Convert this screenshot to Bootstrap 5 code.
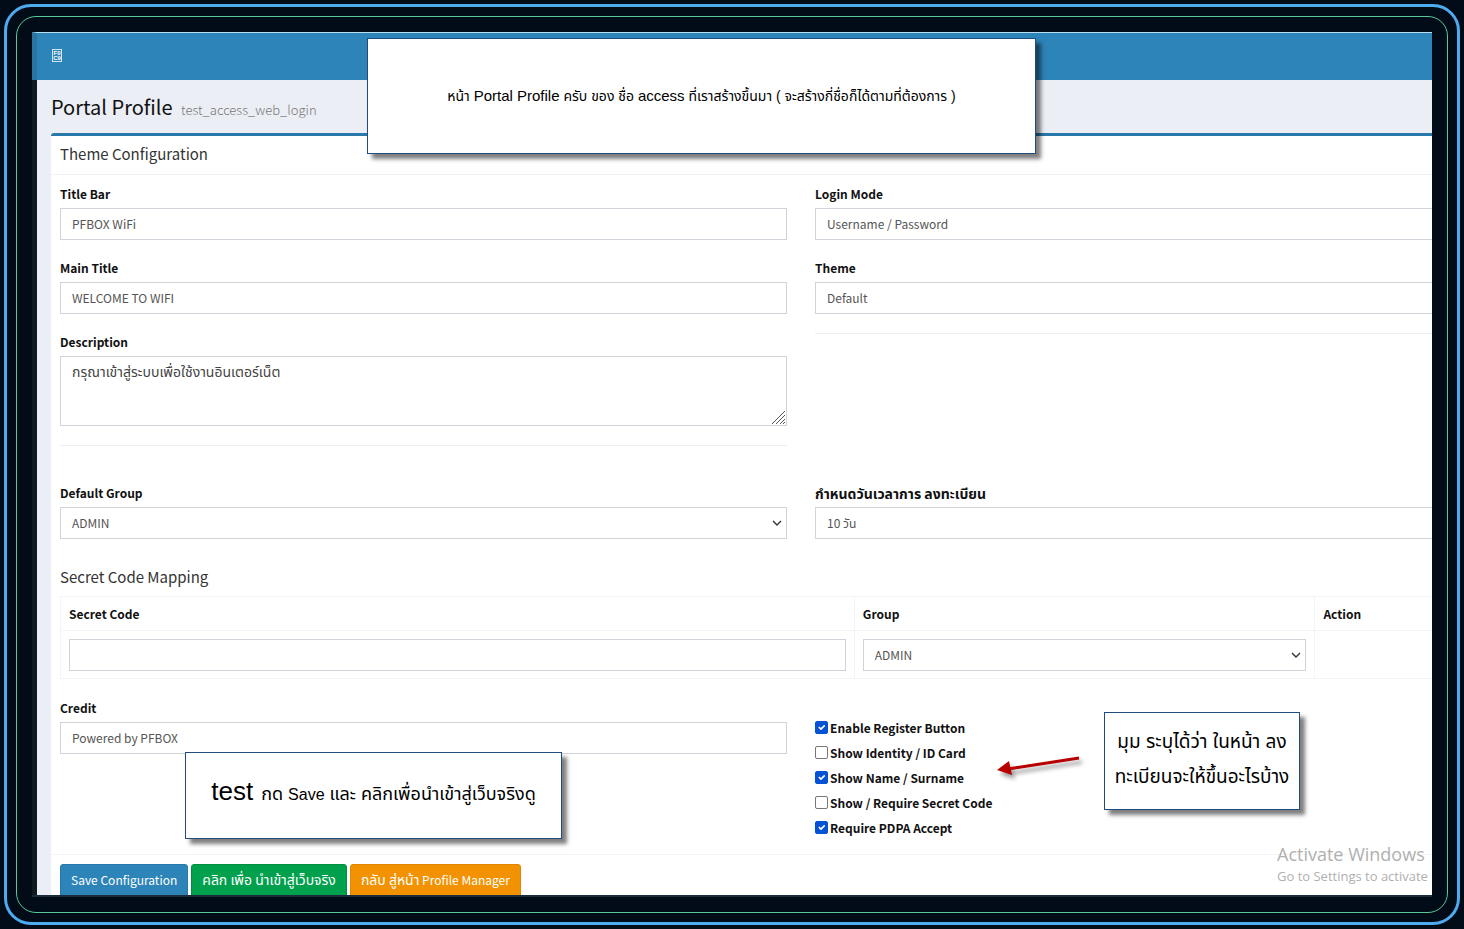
<!DOCTYPE html>
<html lang="th">
<head>
<meta charset="utf-8">
<meta name="viewport" content="width=device-width, initial-scale=1">
<title>Portal Profile</title>
<link href="https://cdn.jsdelivr.net/npm/bootstrap@5.3.0/dist/css/bootstrap.min.css" rel="stylesheet">
<style>
  :root { --ui-font: "Noto Sans CJK SC", "Noto Sans Thai", "Noto Sans", sans-serif; --note-font: "Liberation Sans", "Noto Sans Thai", sans-serif; }
  body { background: #020b18; font-family: var(--ui-font); font-size: 12px; line-height: 18px; color: #222; }
  .frame-outer { height: 100vh; padding: 4px; }
  .frame-blue { border: 3px solid #4eabf0; border-radius: 27px; padding: 9px; }
  .frame-green { border: 1px solid #57c99a; border-radius: 20px; padding: 15px; }
  .screen { background: #ebeef5; border-bottom: 2px solid #1a2b3c; }
  .wide-app { width: 109.5%; }
  .topbar { height: 48px; padding: 0 15px; background: #2d84b8; border-top: 1px solid #b9def0; border-left: 5px solid #2b75a3; }
  .page-area { border-left: 5px solid #0f1a20; }
  .glyph-btn { width: 10px; height: 13px; border: 1px solid #cfe6f4; background: none; color: #fff; font: bold 6px/5px "Liberation Sans", sans-serif; padding: 0; margin-bottom: 2px; }
  .page-head { padding: 14px 14px 0; height: 53px; }
  .page-head h1 { font-size: 20px; line-height: 26px; font-weight: 400; color: #111; }
  .page-head small { font-size: 13px; font-weight: 300; color: #777; margin-left: 4px; }
  .panel { margin: 0 14px; background: #fff; border-top: 3px solid #2878a9; border-radius: 3px 3px 0 0; }
  .panel-head { padding: 8px 9px 0; height: 39px; border-bottom: 1px solid #f2f2f2; }
  .sub-head { font-size: 15px; line-height: 20px; font-weight: 400; color: #333; margin: 0; }
  .map-head { padding-top: 9px; }
  .panel-main { padding: 10px 9px 0; }
  .panel .row { --bs-gutter-x: 28px; }
  .group-row { padding-top: 38px; }
  .field { margin-bottom: 19px; }
  .field label { display: block; font-weight: 700; color: #111; margin-bottom: 5px; }
  .form-control, .form-select { border: 1px solid #d0d3da; border-radius: 0; font-size: 12px; line-height: 18px; height: 32px; color: #555; background-color: #fff; }
  .form-control { padding: 5px 11px 7px; }
  .form-select { padding: 6px 11px; background-image: url("data:image/svg+xml,%3Csvg xmlns='http://www.w3.org/2000/svg' viewBox='0 0 10 10'%3E%3Cpath fill='none' stroke='%23333' stroke-width='1.4' d='M1 3l4 4 4-4'/%3E%3C/svg%3E"); background-size: 10px 10px; background-position: right 4px center; }
  textarea.form-control { height: 70px; color: #444; resize: none; background-image: url("data:image/svg+xml,%3Csvg xmlns='http://www.w3.org/2000/svg' viewBox='0 0 14 14'%3E%3Cpath fill='none' stroke='%23555' d='M1 14L14 1M5 14L14 5M9 14L14 9M12 14l2-2'/%3E%3C/svg%3E"); background-size: 14px 14px; background-repeat: no-repeat; background-position: right 1px bottom 1px; }
  .thai-text, .field .thai-text, textarea.thai-text { font-size: 14px; }
  .rule { height: 1px; background: #eee; }
  .panel-main .map-table { margin: 9px 0 20px; border-color: #f4f4f4; table-layout: fixed; }
  .map-table th, .map-table td { padding: 8px 8px 7px; color: #111; background: #fff; }
  .tick-col { padding-top: 20px; padding-bottom: 10px; }
  .tick { gap: 2px; height: 25px; margin: 0; font-weight: 700; color: #111; }
  .tick .form-check-input { width: 13px; height: 13px; margin: 2px 0 0; border: 1px solid #767676; border-radius: 2px; }
  .tick .form-check-input:checked { background-color: #0553d5; border-color: #0553d5; }
  .panel-foot { border-top: 1px solid #f4f4f4; padding: 9px 9px 20px; gap: 3px; }
  .panel-foot .btn { font-size: 12px; line-height: 20px; padding: 4px 10px 8px; border-radius: 3px; color: #fff; }
  .panel-foot .b-save { background: #2d84b8; border-color: #2878a9; }
  .panel-foot .b-go { background: #00a04c; border-color: #008d43; }
  .panel-foot .b-back { background: #f39200; border-color: #e08600; }
  .note { position: absolute; background: #fff; border: 1px solid #1f4b7d; box-shadow: 5px 5px 4px rgba(0,0,0,.5); color: #000; font-family: var(--note-font); text-align: center; }
  .note-top { left: 335px; top: 6px; width: 669px; height: 116px; font-size: 14px; line-height: 24px; }
  .note-top span { font-size: 15px; }
  .note-test { left: 153px; top: 720px; width: 377px; height: 87px; padding-bottom: 6px; font-size: 18px; line-height: 30px; }
  .note-test .big { font-size: 26px; margin-right: 3px; }
  .note-test .light { font-size: 16px; }
  .note-reg { left: 1072px; top: 680px; width: 196px; height: 98px; font-size: 19px; line-height: 35px; padding: 11px 0; white-space: nowrap; }
  .arrow { position: absolute; left: 962px; top: 720px; filter: drop-shadow(3px 4px 2px rgba(0,0,0,.4)); }
  .watermark { position: absolute; left: 1245px; top: 811px; white-space: nowrap; color: #b0b0b0; font-family: "Open Sans", sans-serif; font-size: 13px; line-height: 20px; }
  .watermark div { font-size: 18px; line-height: 23px; }
</style>
</head>
<body>
<div class="frame-outer">
  <div class="frame-blue h-100">
    <div class="frame-green h-100">
      <div class="position-relative h-100 overflow-hidden">
        <main class="screen h-100 overflow-hidden">
          <div class="wide-app">
            <nav class="topbar d-flex align-items-center"><button class="glyph-btn" type="button" aria-label="Menu">F0<br>C9</button></nav>
            <div class="page-area">
            <header class="page-head"><h1 class="m-0">Portal Profile <small>test_access_web_login</small></h1></header>
            <form class="panel">
              <div class="panel-head"><h2 class="sub-head">Theme Configuration</h2></div>
              <div class="panel-main">
                <div class="row">
                  <div class="col-6">
                    <div class="field"><label for="bar">Title Bar</label><input id="bar" class="form-control" value="PFBOX WiFi"></div>
                    <div class="field"><label for="main">Main Title</label><input id="main" class="form-control" value="WELCOME TO WIFI"></div>
                    <div class="field"><label for="desc">Description</label><textarea id="desc" class="form-control thai-text">กรุณาเข้าสู่ระบบเพื่อใช้งานอินเตอร์เน็ต</textarea></div>
                    <div class="rule"></div>
                  </div>
                  <div class="col-6">
                    <div class="field"><label for="mode">Login Mode</label><select id="mode" class="form-select"><option>Username / Password</option></select></div>
                    <div class="field"><label for="theme">Theme</label><select id="theme" class="form-select"><option>Default</option></select></div>
                    <div class="rule"></div>
                  </div>
                </div>
                <div class="row group-row">
                  <div class="col-6"><div class="field"><label for="grp">Default Group</label><select id="grp" class="form-select"><option>ADMIN</option></select></div></div>
                  <div class="col-6"><div class="field"><label for="days" class="thai-text">กำหนดวันเวลาการ ลงทะเบียน</label><select id="days" class="form-select"><option>10 วัน</option></select></div></div>
                </div>
                <h2 class="sub-head map-head">Secret Code Mapping</h2>
                <table class="table table-bordered map-table">
                  <colgroup><col style="width:53.6%"><col style="width:31.1%"><col></colgroup>
                  <thead><tr><th>Secret Code</th><th>Group</th><th>Action</th></tr></thead>
                  <tbody><tr><td><input class="form-control" aria-label="Secret Code"></td><td><select class="form-select" aria-label="Group"><option>ADMIN</option></select></td><td></td></tr></tbody>
                </table>
                <div class="row">
                  <div class="col-6"><div class="field"><label for="credit">Credit</label><input id="credit" class="form-control" value="Powered by PFBOX"></div></div>
                  <div class="col-6 tick-col">
                    <label class="tick d-flex"><input type="checkbox" class="form-check-input" checked>Enable Register Button</label>
                    <label class="tick d-flex"><input type="checkbox" class="form-check-input">Show Identity / ID Card</label>
                    <label class="tick d-flex"><input type="checkbox" class="form-check-input" checked>Show Name / Surname</label>
                    <label class="tick d-flex"><input type="checkbox" class="form-check-input">Show / Require Secret Code</label>
                    <label class="tick d-flex"><input type="checkbox" class="form-check-input" checked>Require PDPA Accept</label>
                  </div>
                </div>
              </div>
              <div class="panel-foot d-flex">
                <button type="button" class="btn b-save">Save Configuration</button>
                <button type="button" class="btn b-go"><span class="thai-text">คลิก เพื่อ นำเข้าสู่เว็บจริง</span></button>
                <button type="button" class="btn b-back"><span class="thai-text">กลับ สู่หน้า</span> Profile Manager</button>
              </div>
            </form>
            </div>
          </div>
        </main>
        <aside class="note note-top d-flex align-items-center justify-content-center"><div>หน้า <span>Portal Profile</span> ครับ ของ ชื่อ <span>access</span> ที่เราสร้างขึ้นมา ( จะสร้างกี่ชื่อก็ได้ตามที่ต้องการ )</div></aside>
        <aside class="note note-test d-flex align-items-center justify-content-center"><div><span class="big">test</span> กด <span class="light">Save</span> และ คลิกเพื่อนำเข้าสู่เว็บจริงดู</div></aside>
        <aside class="note note-reg">มุม ระบุได้ว่า ในหน้า ลง<br>ทะเบียนจะให้ขึ้นอะไรบ้าง</aside>
        <svg class="arrow" width="92" height="34" viewBox="0 0 92 34"><path d="M14 17L85 6" stroke="#b80000" stroke-width="3"/><path d="M3 18L15 9L18 23Z" fill="#b80000"/></svg>
        <aside class="watermark"><div>Activate Windows</div>Go to Settings to activate</aside>
      </div>
    </div>
  </div>
</div>
<script src="https://cdn.jsdelivr.net/npm/bootstrap@5.3.0/dist/js/bootstrap.bundle.min.js"></script>
</body>
</html>
